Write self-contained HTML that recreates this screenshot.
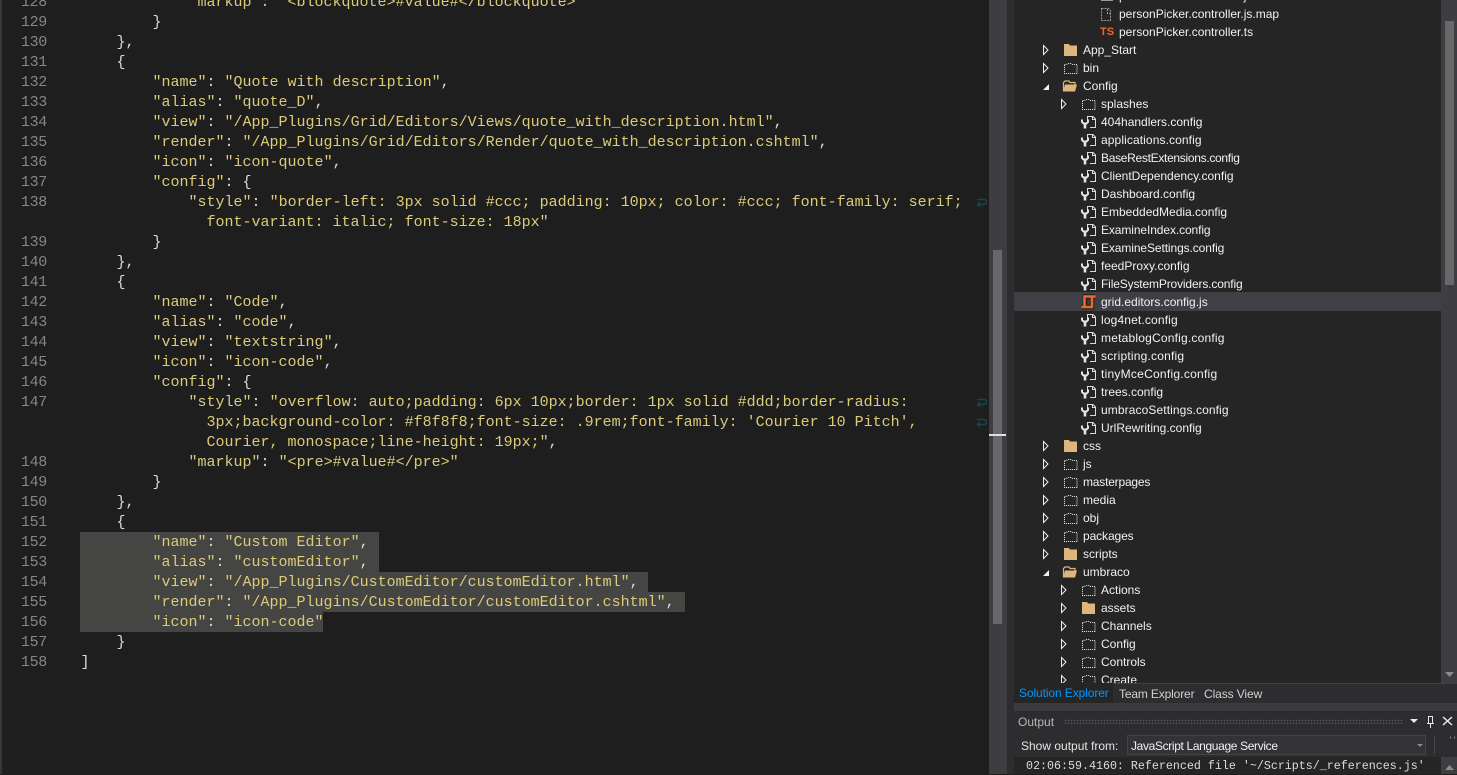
<!DOCTYPE html>
<html><head><meta charset="utf-8"><style>
html,body{margin:0;padding:0;background:#1e1e1e;width:1457px;height:774px;overflow:hidden}
.a{position:absolute}
pre{margin:0;position:absolute;font:15px/20px "Liberation Mono",monospace}
pre b{font-weight:normal;color:#dccb78}
#code{left:80.5px;top:-7px;color:#dcdcdc}
#nums{left:11px;top:-7px;width:36px;text-align:right;color:#868686;letter-spacing:-.3px}
#tree div{position:absolute;font:12px/18px "Liberation Sans",sans-serif;color:#f1f1f1;white-space:nowrap}
svg{position:absolute;display:block}
</style></head><body>
<div class="a" style="left:0;top:0;width:2px;height:774px;background:#37373a"></div>
<div class="a" style="left:80px;top:532px;width:299px;height:40px;background:#454543"></div>
<div class="a" style="left:80px;top:572px;width:568px;height:20px;background:#454543"></div>
<div class="a" style="left:80px;top:592px;width:605px;height:20px;background:#454543"></div>
<div class="a" style="left:80px;top:612px;width:243px;height:20px;background:#454543"></div>
<pre id="nums">128
129
130
131
132
133
134
135
136
137
138

139
140
141
142
143
144
145
146
147


148
149
150
151
152
153
154
155
156
157
158</pre>
<pre id="code">            <b>"markup": "&lt;blockquote&gt;#value#&lt;/blockquote&gt;"</b>
        }
    },
    {
        <b>"name"</b>: <b>"Quote with description"</b>,
        <b>"alias"</b>: <b>"quote_D"</b>,
        <b>"view"</b>: <b>"/App_Plugins/Grid/Editors/Views/quote_with_description.html"</b>,
        <b>"render"</b>: <b>"/App_Plugins/Grid/Editors/Render/quote_with_description.cshtml"</b>,
        <b>"icon"</b>: <b>"icon-quote"</b>,
        <b>"config"</b>: {
            <b>"style"</b>: <b>"border-left: 3px solid #ccc; padding: 10px; color: #ccc; font-family: serif;</b>
              <b>font-variant: italic; font-size: 18px"</b>
        }
    },
    {
        <b>"name"</b>: <b>"Code"</b>,
        <b>"alias"</b>: <b>"code"</b>,
        <b>"view"</b>: <b>"textstring"</b>,
        <b>"icon"</b>: <b>"icon-code"</b>,
        <b>"config"</b>: {
            <b>"style"</b>: <b>"overflow: auto;padding: 6px 10px;border: 1px solid #ddd;border-radius:</b>
              <b>3px;background-color: #f8f8f8;font-size: .9rem;font-family: 'Courier 10 Pitch',</b>
              <b>Courier, monospace;line-height: 19px;"</b>,
            <b>"markup"</b>: <b>"&lt;pre&gt;#value#&lt;/pre&gt;"</b>
        }
    },
    {
        <b>"name"</b>: <b>"Custom Editor"</b>,
        <b>"alias"</b>: <b>"customEditor"</b>,
        <b>"view"</b>: <b>"/App_Plugins/CustomEditor/customEditor.html"</b>,
        <b>"render"</b>: <b>"/App_Plugins/CustomEditor/customEditor.cshtml"</b>,
        <b>"icon"</b>: <b>"icon-code"</b>
    }
]</pre>
<svg style="left:0;top:0" width="1457" height="774" fill="none">
<g stroke="#1a4450" stroke-width="1.4"><path d="M977 199.500h7q2.500 0 2.500 2.500t-2.500 2.500h-6m2-2.500l-2.500 2.500 2.500 2.500"/><path d="M977 399.500h7q2.500 0 2.500 2.500t-2.500 2.500h-6m2-2.500l-2.500 2.500 2.500 2.500"/><path d="M977 419.500h7q2.500 0 2.500 2.500t-2.500 2.500h-6m2-2.500l-2.500 2.500 2.500 2.500"/></g>
</svg>
<!-- editor scrollbar -->
<div class="a" style="left:989px;top:0;width:18px;height:774px;background:#3e3e42"></div>
<div class="a" style="left:993px;top:250px;width:9px;height:374px;background:#686868"></div>
<div class="a" style="left:989px;top:434px;width:17px;height:2px;background:#e0e0e0"></div>
<div class="a" style="left:1007px;top:0;width:450px;height:774px;background:#2d2d30"></div>
<!-- tree -->
<div class="a" style="left:1014px;top:0;width:427px;height:684px;background:#252526;overflow:hidden" id="tree">
<div style="left:0;top:292px;width:427px;height:19px;background:#3f3f46"></div>
<div style="left:105px;top:-13px">personPicker.controller.js</div>
<div style="left:105px;top:5px">personPicker.controller.js.map</div>
<div style="left:105px;top:23px">personPicker.controller.ts</div>
<div style="left:69px;top:41px">App_Start</div>
<div style="left:69px;top:59px">bin</div>
<div style="left:69px;top:77px">Config</div>
<div style="left:87px;top:95px">splashes</div>
<div style="left:87px;top:113px">404handlers.config</div>
<div style="left:87px;top:131px;letter-spacing:.1px">applications.config</div>
<div style="left:87px;top:149px;letter-spacing:-.3px">BaseRestExtensions.config</div>
<div style="left:87px;top:167px">ClientDependency.config</div>
<div style="left:87px;top:185px">Dashboard.config</div>
<div style="left:87px;top:203px">EmbeddedMedia.config</div>
<div style="left:87px;top:221px;letter-spacing:-.1px">ExamineIndex.config</div>
<div style="left:87px;top:239px;letter-spacing:-.1px">ExamineSettings.config</div>
<div style="left:87px;top:257px">feedProxy.config</div>
<div style="left:87px;top:275px;letter-spacing:-.15px">FileSystemProviders.config</div>
<div style="left:87px;top:293px">grid.editors.config.js</div>
<div style="left:87px;top:311px;letter-spacing:.15px">log4net.config</div>
<div style="left:87px;top:329px;letter-spacing:.2px">metablogConfig.config</div>
<div style="left:87px;top:347px;letter-spacing:.2px">scripting.config</div>
<div style="left:87px;top:365px;letter-spacing:.25px">tinyMceConfig.config</div>
<div style="left:87px;top:383px">trees.config</div>
<div style="left:87px;top:401px;letter-spacing:.1px">umbracoSettings.config</div>
<div style="left:87px;top:419px">UrlRewriting.config</div>
<div style="left:69px;top:437px">css</div>
<div style="left:69px;top:455px">js</div>
<div style="left:69px;top:473px;letter-spacing:-.2px">masterpages</div>
<div style="left:69px;top:491px">media</div>
<div style="left:69px;top:509px">obj</div>
<div style="left:69px;top:527px;letter-spacing:-.1px">packages</div>
<div style="left:69px;top:545px">scripts</div>
<div style="left:69px;top:563px">umbraco</div>
<div style="left:87px;top:581px">Actions</div>
<div style="left:87px;top:599px">assets</div>
<div style="left:87px;top:617px">Channels</div>
<div style="left:87px;top:635px">Config</div>
<div style="left:87px;top:653px">Controls</div>
<div style="left:87px;top:671px">Create</div>
<div style="left:86px;top:23px;font:bold 11px/18px 'Liberation Sans',sans-serif;color:#f0672b">TS</div>
</div>
<svg style="left:0;top:0;overflow:hidden" width="1457" height="684" fill="none">
<defs>
<g id="ar"><path d="M.5-4.500L5 0 .5 4.500z" stroke="#f0f0f0" fill="#252526"/></g>
<g id="ex"><path d="M0 4L6-2V4z" fill="#f0f0f0"/></g>
<g id="ff"><path d="M0-6h5l1 1.500h7V6H0z" fill="#dcb67a"/></g>
<g id="fd"><path d="M.5-3.500h2l1.500-1h3l1.500 1h4.500V5.500H.500z" stroke="#f0f0f0" stroke-dasharray="1 1"/></g>
<g id="fo"><path d="M.5 5.500V-3.500l1.500-1.500h4l1 1.500h5v2.500" stroke="#dcb67a" stroke-width="1.200"/><path d="M2-1.500H14L12 5.500H0z" fill="#dcb67a"/></g>
<g id="cf"><path d="M6.500-1.500V-5.500H12L14.500-3V5.500H9" stroke="#dcdcdc"/><path d="M11.500-5.500V-2.500H14.500" stroke="#dcdcdc"/><path d="M1-2.500V0L2.500 1.500H5.500L7 0V-2.500" stroke="#e4e4e4" stroke-width="2"/><path d="M4 1V6.500" stroke="#e4e4e4" stroke-width="2.600"/></g>
</defs>
<path d="M1101 0.500h12" stroke="#999"/>
<path d="M1101.500 8.500h7l2 2v10h-9z" stroke="#9a9a9a" stroke-dasharray="2 1"/>
<path d="M1107.500 9v4.500h3.500" stroke="#9a9a9a" stroke-dasharray="2 1"/>
<use href="#ar" x="1043" y="50"/><use href="#ff" x="1064" y="50"/>
<use href="#ar" x="1043" y="68"/><use href="#fd" x="1064" y="68"/>
<use href="#ex" x="1043" y="86"/><use href="#fo" x="1063" y="86"/>
<use href="#ar" x="1061" y="104"/><use href="#fd" x="1082" y="104"/>
<use href="#cf" x="1081" y="122"/><use href="#cf" x="1081" y="140"/><use href="#cf" x="1081" y="158"/><use href="#cf" x="1081" y="176"/><use href="#cf" x="1081" y="194"/><use href="#cf" x="1081" y="212"/><use href="#cf" x="1081" y="230"/><use href="#cf" x="1081" y="248"/><use href="#cf" x="1081" y="266"/><use href="#cf" x="1081" y="284"/>
<path d="M1085 306V296.500H1095M1082 307H1092V297" stroke="#1e1e1e" stroke-width="4.500"/>
<path d="M1084.500 306V296.500H1095.500M1081.500 307H1092V297" stroke="#f0672b" stroke-width="2.600"/>
<use href="#cf" x="1081" y="320"/><use href="#cf" x="1081" y="338"/><use href="#cf" x="1081" y="356"/><use href="#cf" x="1081" y="374"/><use href="#cf" x="1081" y="392"/><use href="#cf" x="1081" y="410"/><use href="#cf" x="1081" y="428"/>
<use href="#ar" x="1043" y="446"/><use href="#ff" x="1064" y="446"/>
<use href="#ar" x="1043" y="464"/><use href="#fd" x="1064" y="464"/>
<use href="#ar" x="1043" y="482"/><use href="#fd" x="1064" y="482"/>
<use href="#ar" x="1043" y="500"/><use href="#fd" x="1064" y="500"/>
<use href="#ar" x="1043" y="518"/><use href="#fd" x="1064" y="518"/>
<use href="#ar" x="1043" y="536"/><use href="#fd" x="1064" y="536"/>
<use href="#ar" x="1043" y="554"/><use href="#ff" x="1064" y="554"/>
<use href="#ex" x="1043" y="572"/><use href="#fo" x="1063" y="572"/>
<use href="#ar" x="1061" y="590"/><use href="#fd" x="1082" y="590"/>
<use href="#ar" x="1061" y="608"/><use href="#ff" x="1082" y="608"/>
<use href="#ar" x="1061" y="626"/><use href="#fd" x="1082" y="626"/>
<use href="#ar" x="1061" y="644"/><use href="#fd" x="1082" y="644"/>
<use href="#ar" x="1061" y="662"/><use href="#fd" x="1082" y="662"/>
<use href="#ar" x="1061" y="680"/><use href="#fd" x="1082" y="680"/>
</svg>
<!-- tree scrollbar -->
<div class="a" style="left:1441px;top:0;width:16px;height:684px;background:#3e3e42"></div>
<div class="a" style="left:1445px;top:21px;width:9px;height:264px;background:#686868"></div>
<!-- tabs -->
<div class="a" style="left:1014px;top:684px;width:443px;height:20px;background:#2d2d30"></div>
<div class="a" style="left:1014px;top:683px;width:99px;height:20px;background:#252526"></div>
<div class="a" style="left:1113px;top:683px;width:344px;height:1px;background:#3f3f46"></div>
<div class="a" style="left:1014px;top:703px;width:443px;height:8px;background:#3a3a3f"></div>
<div class="a" style="left:1019px;top:684px;font:12px/18px 'Liberation Sans',sans-serif;color:#0097fb;letter-spacing:-.1px">Solution Explorer</div>
<div class="a" style="left:1119px;top:685px;font:12px/18px 'Liberation Sans',sans-serif;color:#d0d0d0;letter-spacing:-.15px">Team Explorer</div>
<div class="a" style="left:1204px;top:685px;font:12px/18px 'Liberation Sans',sans-serif;color:#d0d0d0;letter-spacing:-.1px">Class View</div>
<!-- output -->
<div class="a" style="left:1014px;top:711px;width:443px;height:63px;background:#2d2d30"></div>
<div class="a" style="left:1018px;top:713px;font:12px/18px 'Liberation Sans',sans-serif;color:#b8b8b8">Output</div>
<div class="a" style="left:1064px;top:719px;width:339px;height:5px;background-image:radial-gradient(#55555a 35%,transparent 40%);background-size:3px 3px"></div>
<div class="a" style="left:1021px;top:737px;font:12px/18px 'Liberation Sans',sans-serif;color:#e4e4e4">Show output from:</div>
<div class="a" style="left:1127px;top:735px;width:299px;height:20px;background:#333337;border:1px solid #434346;box-sizing:border-box"></div>
<div class="a" style="left:1131px;top:737px;font:12px/18px 'Liberation Sans',sans-serif;color:#f1f1f1;letter-spacing:-.35px">JavaScript Language Service</div>
<div class="a" style="left:1434px;top:736px;width:1px;height:18px;background:#46464a"></div>
<div class="a" style="left:1014px;top:757px;width:427px;height:17px;background:#252526"></div>
<div class="a" style="left:1441px;top:757px;width:16px;height:17px;background:#3e3e42"></div>
<pre class="a" style="left:1026px;top:757px;font:11.67px/18px 'Liberation Mono',monospace;color:#dcdcdc">02:06:59.4160: Referenced file '~/Scripts/_references.js'</pre>
<svg style="left:0;top:0" width="1457" height="774" fill="none">
<path d="M1445 672h9l-4.500 5z" fill="#8a8a8e"/>
<path d="M1445 770h9l-4.500-5z" fill="#8a8a8e"/>
<path d="M1410 719h8l-4 4z" fill="#e8e8e8"/>
<path d="M1417 744h6l-3 3z" fill="#8a8a8e"/>
<path d="M1428.500 716.500h4v7h-4zM1427 723.500h7M1430.500 724v4" stroke="#e8e8e8"/>
<path d="M1443 717l9 8M1452 717l-9 8" stroke="#e8e8e8" stroke-width="1.500"/>
<path d="M1450 737.500h1M1454 737.500h1" stroke="#888" stroke-width="2"/>
</svg>
</body></html>
